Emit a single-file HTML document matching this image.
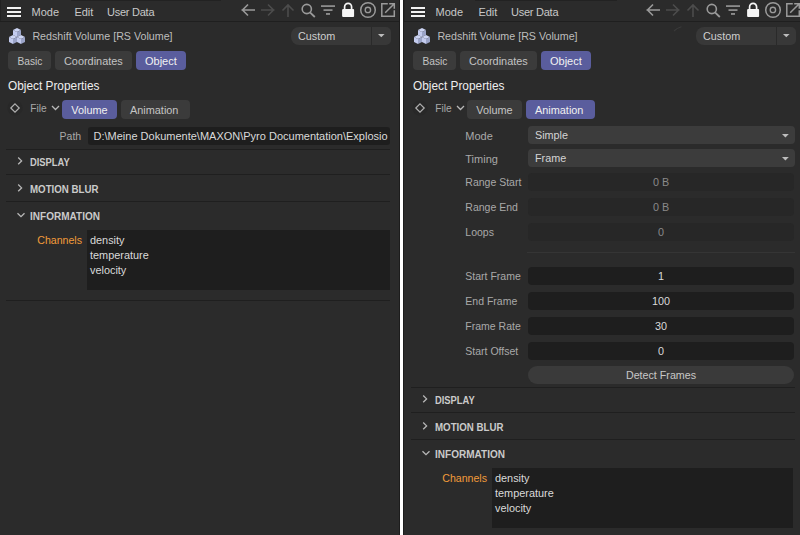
<!DOCTYPE html>
<html><head><meta charset="utf-8"><style>
html,body{margin:0;padding:0;}
body{width:800px;height:535px;overflow:hidden;background:#2b2b2b;position:relative;font-family:"Liberation Sans",sans-serif;}
.t{position:absolute;white-space:nowrap;}
.r{position:absolute;}
.s{position:absolute;overflow:visible;}
</style></head><body>
<div class="r" style="left:7px;top:7px;width:14px;height:2px;background:#f2f2f2;border-radius:0px;"></div><div class="r" style="left:7px;top:11px;width:14px;height:2px;background:#f2f2f2;border-radius:0px;"></div><div class="r" style="left:7px;top:15px;width:14px;height:2px;background:#f2f2f2;border-radius:0px;"></div><div class="t" style="left:31.5px;top:5.19px;font-size:11px;line-height:14px;color:#c8c8c8;font-weight:400;">Mode</div><div class="t" style="left:74.4px;top:5.19px;font-size:11px;line-height:14px;color:#c8c8c8;font-weight:400;">Edit</div><div class="t" style="left:107px;top:5.19px;font-size:11px;line-height:14px;color:#c8c8c8;font-weight:400;letter-spacing:-0.25px;">User Data</div><svg class="s" style="left:0;top:0" width="800" height="21"><path d="M241.5,10 H255 M248,4.5 L242.5,10 L248,15.5" stroke="#9a9a9a" stroke-width="1.6" fill="none"/><path d="M261,10 H274.5 M268,4.5 L273.5,10 L268,15.5" stroke="#4c4c4c" stroke-width="1.6" fill="none"/><path d="M288,5 V17 M282.5,10.5 L288,5 L293.5,10.5" stroke="#4c4c4c" stroke-width="1.6" fill="none"/><circle cx="306.8" cy="9" r="4.6" stroke="#9a9a9a" stroke-width="1.6" fill="none"/><path d="M310,12.3 L314.8,17" stroke="#9a9a9a" stroke-width="1.8"/><rect x="321" y="5.2" width="14" height="1.8" fill="#8c8c8c"/><rect x="323.5" y="9.2" width="9" height="1.8" fill="#8c8c8c"/><rect x="326" y="13" width="4" height="1.9" fill="#8c8c8c"/><path d="M344.6,9.5 V7 A3.5,3.7 0 0 1 351.6,7 V9.5" stroke="#f6f6f6" stroke-width="1.7" fill="none"/><rect x="342.1" y="8.9" width="12" height="8" rx="1" fill="#f6f6f6"/><circle cx="368" cy="10" r="7.3" stroke="#9a9a9a" stroke-width="1.5" fill="none"/><circle cx="367.9" cy="9.9" r="2.7" stroke="#9a9a9a" stroke-width="1.35" fill="none"/><path d="M387.8,3.8 H381.8 V16.2 H394.3 V10.2" stroke="#9a9a9a" stroke-width="1.5" fill="none"/><path d="M385.2,12.8 L394,4 M389.2,3.8 H394.3 V8.8" stroke="#9a9a9a" stroke-width="1.5" fill="none"/></svg><div class="r" style="left:0px;top:21px;width:400px;height:1px;background:#1f1f1f;border-radius:0px;"></div><svg class="s" style="left:8.5px;top:27.5px" width="17" height="17" viewBox="0 0 17 17"><polygon points="8,0 12,2 8,4 4,2" fill="#ccd4f3"/><polygon points="4,2 8,4 8,9 4,7" fill="#c3cbee"/><polygon points="8,4 12,2 12,7 8,9" fill="#9ba4c8"/><polygon points="4,7 8,9 4,11 0,9" fill="#ccd4f3"/><polygon points="0,9 4,11 4,16 0,14" fill="#c3cbee"/><polygon points="4,11 8,9 8,14 4,16" fill="#9ba4c8"/><polygon points="12,7 16,9 12,11 8,9" fill="#ccd4f3"/><polygon points="8,9 12,11 12,16 8,14" fill="#c3cbee"/><polygon points="12,11 16,9 16,14 12,16" fill="#9ba4c8"/></svg><div class="t" style="left:32.4px;top:29.79px;font-size:10.7px;line-height:13px;color:#bdbdbd;font-weight:400;">Redshift Volume [RS Volume]</div><div class="r" style="left:291px;top:27px;width:100px;height:18px;background:#383838;border-radius:8px 5px 5px 8px;"></div><div class="r" style="left:371px;top:27px;width:1px;height:18px;background:#2a2a2a;border-radius:0px;"></div><div class="t" style="left:298px;top:29.26px;font-size:10.8px;line-height:14px;color:#cfcfcf;font-weight:400;">Custom</div><svg class="s" style="left:378px;top:34.2px" width="8" height="4" viewBox="0 0 8 4"><polygon points="0,0 6.6,0 3.3,3.3" fill="#bcbcbc"/></svg><div class="r" style="left:8px;top:51px;width:43px;height:19px;background:#3b3b3b;border-radius:4px;"></div><div class="t" style="left:17.5px;top:54.97px;font-size:10.2px;line-height:13px;color:#c4c4c4;font-weight:400;">Basic</div><div class="r" style="left:55px;top:51px;width:77px;height:19px;background:#3b3b3b;border-radius:4px;"></div><div class="t" style="left:64px;top:54.22px;font-size:10.9px;line-height:14px;color:#c4c4c4;font-weight:400;">Coordinates</div><div class="r" style="left:136px;top:51px;width:50px;height:19px;background:#5a5d9d;border-radius:4px;"></div><div class="t" style="left:145px;top:54.19px;font-size:11px;line-height:14px;color:#f2f2f2;font-weight:400;">Object</div><div class="t" style="left:8px;top:79.19px;font-size:11.85px;line-height:15px;color:#eeeeee;font-weight:400;">Object Properties</div><svg class="s" style="left:7px;top:100px" width="16" height="16" viewBox="0 0 16 16"><circle cx="8" cy="8" r="7.6" fill="#282828"/></svg><svg class="s" style="left:9px;top:102px" width="12" height="12" viewBox="0 0 12 12"><polygon points="6,1.8 10.2,6 6,10.2 1.8,6" stroke="#b0b0b0" stroke-width="1.2" fill="none"/></svg><div class="t" style="left:30.3px;top:101.77px;font-size:10.2px;line-height:13px;color:#a8a8a8;font-weight:400;">File</div><svg class="s" style="left:50.5px;top:104.8px" width="10" height="6" viewBox="0 0 10 6"><path d="M1,1 L4.5,4.5 L8,1" stroke="#b8b8b8" stroke-width="1.3" fill="none"/></svg><div class="r" style="left:62px;top:100px;width:55px;height:19px;background:#5a5d9d;border-radius:4px;"></div><div class="t" style="left:71.3px;top:103.02px;font-size:10.9px;line-height:14px;color:#f0f0f0;font-weight:400;">Volume</div><div class="r" style="left:121px;top:100px;width:69px;height:19px;background:#3b3b3b;border-radius:4px;"></div><div class="t" style="left:130px;top:103.02px;font-size:10.9px;line-height:14px;color:#c4c4c4;font-weight:400;">Animation</div><div class="t" style="left:-218.8px;width:300px;text-align:right;top:129.86px;font-size:10.5px;line-height:13px;color:#a9a9a9;font-weight:400;">Path</div><div class="r" style="left:88px;top:127px;width:302px;height:18px;background:#1e1e1e;border-radius:3px;"></div><div class="t" style="left:88px;top:127px;width:302px;height:18px;overflow:hidden;"><div class="t" style="left:5.5px;top:3.19px;font-size:11px;line-height:13px;color:#dadada;white-space:nowrap;">D:\Meine Dokumente\MAXON\Pyro Documentation\Explosio</div></div><div class="r" style="left:6px;top:149px;width:384px;height:1px;background:#1f1f1f;border-radius:0px;"></div><div class="t" style="left:30.3px;top:156.10px;font-size:10.4px;line-height:13px;color:#cacaca;font-weight:700;transform:scaleX(0.9);transform-origin:0 0;">DISPLAY</div><svg class="s" style="left:16px;top:156px" width="8" height="10" viewBox="0 0 8 10"><path d="M2.2,1.5 L5.6,4.9 L2.2,8.3" stroke="#b8b8b8" stroke-width="1.3" fill="none"/></svg><div class="r" style="left:6px;top:174px;width:384px;height:1px;background:#1f1f1f;border-radius:0px;"></div><div class="t" style="left:30.3px;top:183.10px;font-size:10.4px;line-height:13px;color:#cacaca;font-weight:700;transform:scaleX(0.935);transform-origin:0 0;">MOTION BLUR</div><svg class="s" style="left:16px;top:183px" width="8" height="10" viewBox="0 0 8 10"><path d="M2.2,1.5 L5.6,4.9 L2.2,8.3" stroke="#b8b8b8" stroke-width="1.3" fill="none"/></svg><div class="r" style="left:6px;top:201px;width:384px;height:1px;background:#1f1f1f;border-radius:0px;"></div><div class="t" style="left:30.3px;top:210.10px;font-size:10.4px;line-height:13px;color:#cacaca;font-weight:700;transform:scaleX(0.965);transform-origin:0 0;">INFORMATION</div><svg class="s" style="left:16px;top:211px" width="10" height="8" viewBox="0 0 10 8"><path d="M1.5,2.2 L5,5.7 L8.5,2.2" stroke="#b8b8b8" stroke-width="1.3" fill="none"/></svg><div class="t" style="left:-218px;width:300px;text-align:right;top:233.83px;font-size:10.6px;line-height:13px;color:#f29b3a;font-weight:400;">Channels</div><div class="r" style="left:87px;top:230px;width:303px;height:60px;background:#1e1e1e;border-radius:0px;"></div><div class="t" style="left:90px;top:233.22px;font-size:10.9px;line-height:14px;color:#dadada;font-weight:400;">density</div><div class="t" style="left:90px;top:248.22px;font-size:10.9px;line-height:14px;color:#dadada;font-weight:400;">temperature</div><div class="t" style="left:90px;top:263.22px;font-size:10.9px;line-height:14px;color:#dadada;font-weight:400;">velocity</div><div class="r" style="left:6px;top:300px;width:384px;height:1px;background:#1f1f1f;border-radius:0px;"></div><div class="r" style="left:411px;top:7px;width:14px;height:2px;background:#f2f2f2;border-radius:0px;"></div><div class="r" style="left:411px;top:11px;width:14px;height:2px;background:#f2f2f2;border-radius:0px;"></div><div class="r" style="left:411px;top:15px;width:14px;height:2px;background:#f2f2f2;border-radius:0px;"></div><div class="t" style="left:435.5px;top:5.19px;font-size:11px;line-height:14px;color:#c8c8c8;font-weight:400;">Mode</div><div class="t" style="left:478.4px;top:5.19px;font-size:11px;line-height:14px;color:#c8c8c8;font-weight:400;">Edit</div><div class="t" style="left:511px;top:5.19px;font-size:11px;line-height:14px;color:#c8c8c8;font-weight:400;letter-spacing:-0.25px;">User Data</div><svg class="s" style="left:0;top:0" width="800" height="21"><path d="M646.5,10 H660 M653,4.5 L647.5,10 L653,15.5" stroke="#9a9a9a" stroke-width="1.6" fill="none"/><path d="M666,10 H679.5 M673,4.5 L678.5,10 L673,15.5" stroke="#4c4c4c" stroke-width="1.6" fill="none"/><path d="M693,5 V17 M687.5,10.5 L693,5 L698.5,10.5" stroke="#4c4c4c" stroke-width="1.6" fill="none"/><circle cx="711.8" cy="9" r="4.6" stroke="#9a9a9a" stroke-width="1.6" fill="none"/><path d="M715,12.3 L719.8,17" stroke="#9a9a9a" stroke-width="1.8"/><rect x="726" y="5.2" width="14" height="1.8" fill="#8c8c8c"/><rect x="728.5" y="9.2" width="9" height="1.8" fill="#8c8c8c"/><rect x="731" y="13" width="4" height="1.9" fill="#8c8c8c"/><path d="M749.6,9.5 V7 A3.5,3.7 0 0 1 756.6,7 V9.5" stroke="#f6f6f6" stroke-width="1.7" fill="none"/><rect x="747.1" y="8.9" width="12" height="8" rx="1" fill="#f6f6f6"/><circle cx="773" cy="10" r="7.3" stroke="#9a9a9a" stroke-width="1.5" fill="none"/><circle cx="772.9" cy="9.9" r="2.7" stroke="#9a9a9a" stroke-width="1.35" fill="none"/><path d="M792.8,3.8 H786.8 V16.2 H799.3 V10.2" stroke="#9a9a9a" stroke-width="1.5" fill="none"/><path d="M790.2,12.8 L799,4 M794.2,3.8 H799.3 V8.8" stroke="#9a9a9a" stroke-width="1.5" fill="none"/></svg><div class="r" style="left:404px;top:21px;width:400px;height:1px;background:#1f1f1f;border-radius:0px;"></div><svg class="s" style="left:413.5px;top:27.5px" width="17" height="17" viewBox="0 0 17 17"><polygon points="8,0 12,2 8,4 4,2" fill="#ccd4f3"/><polygon points="4,2 8,4 8,9 4,7" fill="#c3cbee"/><polygon points="8,4 12,2 12,7 8,9" fill="#9ba4c8"/><polygon points="4,7 8,9 4,11 0,9" fill="#ccd4f3"/><polygon points="0,9 4,11 4,16 0,14" fill="#c3cbee"/><polygon points="4,11 8,9 8,14 4,16" fill="#9ba4c8"/><polygon points="12,7 16,9 12,11 8,9" fill="#ccd4f3"/><polygon points="8,9 12,11 12,16 8,14" fill="#c3cbee"/><polygon points="12,11 16,9 16,14 12,16" fill="#9ba4c8"/></svg><div class="t" style="left:437.4px;top:29.79px;font-size:10.7px;line-height:13px;color:#bdbdbd;font-weight:400;">Redshift Volume [RS Volume]</div><div class="r" style="left:696px;top:27px;width:100px;height:18px;background:#383838;border-radius:8px 5px 5px 8px;"></div><div class="r" style="left:776px;top:27px;width:1px;height:18px;background:#2a2a2a;border-radius:0px;"></div><div class="t" style="left:703px;top:29.26px;font-size:10.8px;line-height:14px;color:#cfcfcf;font-weight:400;">Custom</div><svg class="s" style="left:783px;top:34.2px" width="8" height="4" viewBox="0 0 8 4"><polygon points="0,0 6.6,0 3.3,3.3" fill="#bcbcbc"/></svg><div class="r" style="left:413px;top:51px;width:43px;height:19px;background:#3b3b3b;border-radius:4px;"></div><div class="t" style="left:422.5px;top:54.97px;font-size:10.2px;line-height:13px;color:#c4c4c4;font-weight:400;">Basic</div><div class="r" style="left:460px;top:51px;width:77px;height:19px;background:#3b3b3b;border-radius:4px;"></div><div class="t" style="left:469px;top:54.22px;font-size:10.9px;line-height:14px;color:#c4c4c4;font-weight:400;">Coordinates</div><div class="r" style="left:541px;top:51px;width:50px;height:19px;background:#5a5d9d;border-radius:4px;"></div><div class="t" style="left:550px;top:54.19px;font-size:11px;line-height:14px;color:#f2f2f2;font-weight:400;">Object</div><div class="t" style="left:413px;top:79.19px;font-size:11.85px;line-height:15px;color:#eeeeee;font-weight:400;">Object Properties</div><svg class="s" style="left:412px;top:100px" width="16" height="16" viewBox="0 0 16 16"><circle cx="8" cy="8" r="7.6" fill="#282828"/></svg><svg class="s" style="left:414px;top:102px" width="12" height="12" viewBox="0 0 12 12"><polygon points="6,1.8 10.2,6 6,10.2 1.8,6" stroke="#b0b0b0" stroke-width="1.2" fill="none"/></svg><div class="t" style="left:435.3px;top:101.77px;font-size:10.2px;line-height:13px;color:#a8a8a8;font-weight:400;">File</div><svg class="s" style="left:455.5px;top:104.8px" width="10" height="6" viewBox="0 0 10 6"><path d="M1,1 L4.5,4.5 L8,1" stroke="#b8b8b8" stroke-width="1.3" fill="none"/></svg><div class="r" style="left:467px;top:100px;width:55px;height:19px;background:#3b3b3b;border-radius:4px;"></div><div class="t" style="left:476.3px;top:103.02px;font-size:10.9px;line-height:14px;color:#c4c4c4;font-weight:400;">Volume</div><div class="r" style="left:526px;top:100px;width:69px;height:19px;background:#5a5d9d;border-radius:4px;"></div><div class="t" style="left:535px;top:103.02px;font-size:10.9px;line-height:14px;color:#f0f0f0;font-weight:400;">Animation</div><div class="t" style="left:465.3px;top:128.59px;font-size:11px;line-height:14px;color:#a9a9a9;font-weight:400;">Mode</div><div class="r" style="left:528px;top:126px;width:267px;height:18px;background:#3c3c3c;border-radius:4px;"></div><div class="t" style="left:535px;top:127.66px;font-size:10.8px;line-height:14px;color:#d4d4d4;font-weight:400;">Simple</div><svg class="s" style="left:781.6px;top:134px" width="8" height="4" viewBox="0 0 8 4"><polygon points="0,0 6.8,0 3.4,3.4" fill="#bdbdbd"/></svg><div class="t" style="left:465.3px;top:151.69px;font-size:11px;line-height:14px;color:#a9a9a9;font-weight:400;">Timing</div><div class="r" style="left:528px;top:149px;width:267px;height:18px;background:#3c3c3c;border-radius:4px;"></div><div class="t" style="left:535px;top:150.66px;font-size:10.8px;line-height:14px;color:#d4d4d4;font-weight:400;">Frame</div><svg class="s" style="left:781.6px;top:157px" width="8" height="4" viewBox="0 0 8 4"><polygon points="0,0 6.8,0 3.4,3.4" fill="#bdbdbd"/></svg><div class="t" style="left:465.3px;top:175.86px;font-size:10.5px;line-height:13px;color:#a9a9a9;font-weight:400;">Range Start</div><div class="r" style="left:528px;top:173px;width:265.5px;height:17.5px;background:#272727;border-radius:4px;"></div><div class="t" style="left:461px;width:400px;text-align:center;top:175.26px;font-size:10.8px;line-height:14px;color:#8a8a8a;font-weight:400;">0 B</div><div class="t" style="left:465.3px;top:200.86px;font-size:10.5px;line-height:13px;color:#a9a9a9;font-weight:400;">Range End</div><div class="r" style="left:528px;top:198px;width:265.5px;height:17.5px;background:#272727;border-radius:4px;"></div><div class="t" style="left:461px;width:400px;text-align:center;top:200.26px;font-size:10.8px;line-height:14px;color:#8a8a8a;font-weight:400;">0 B</div><div class="t" style="left:465.3px;top:225.86px;font-size:10.5px;line-height:13px;color:#a9a9a9;font-weight:400;">Loops</div><div class="r" style="left:528px;top:223px;width:265.5px;height:17.5px;background:#272727;border-radius:4px;"></div><div class="t" style="left:461px;width:400px;text-align:center;top:225.26px;font-size:10.8px;line-height:14px;color:#8a8a8a;font-weight:400;">0</div><div class="t" style="left:465.3px;top:269.86px;font-size:10.5px;line-height:13px;color:#a9a9a9;font-weight:400;">Start Frame</div><div class="r" style="left:528px;top:267px;width:265.5px;height:18px;background:#1e1e1e;border-radius:4px;"></div><div class="t" style="left:461px;width:400px;text-align:center;top:269.06px;font-size:10.8px;line-height:14px;color:#dadada;font-weight:400;">1</div><div class="t" style="left:465.3px;top:294.86px;font-size:10.5px;line-height:13px;color:#a9a9a9;font-weight:400;">End Frame</div><div class="r" style="left:528px;top:292px;width:265.5px;height:18px;background:#1e1e1e;border-radius:4px;"></div><div class="t" style="left:461px;width:400px;text-align:center;top:294.06px;font-size:10.8px;line-height:14px;color:#dadada;font-weight:400;">100</div><div class="t" style="left:465.3px;top:319.86px;font-size:10.5px;line-height:13px;color:#a9a9a9;font-weight:400;">Frame Rate</div><div class="r" style="left:528px;top:317px;width:265.5px;height:18px;background:#1e1e1e;border-radius:4px;"></div><div class="t" style="left:461px;width:400px;text-align:center;top:319.06px;font-size:10.8px;line-height:14px;color:#dadada;font-weight:400;">30</div><div class="t" style="left:465.3px;top:344.86px;font-size:10.5px;line-height:13px;color:#a9a9a9;font-weight:400;">Start Offset</div><div class="r" style="left:528px;top:342px;width:265.5px;height:18px;background:#1e1e1e;border-radius:4px;"></div><div class="t" style="left:461px;width:400px;text-align:center;top:344.06px;font-size:10.8px;line-height:14px;color:#dadada;font-weight:400;">0</div><div class="r" style="left:527px;top:252px;width:268px;height:1px;background:#353535;border-radius:0px;"></div><div class="r" style="left:528px;top:366px;width:265.5px;height:18px;background:#3a3a3a;border-radius:9px;"></div><div class="t" style="left:461px;width:400px;text-align:center;top:368.59px;font-size:10.7px;line-height:13px;color:#c8c8c8;font-weight:400;">Detect Frames</div><div class="r" style="left:411px;top:387px;width:384px;height:1px;background:#1f1f1f;border-radius:0px;"></div><div class="t" style="left:435.3px;top:394.10px;font-size:10.4px;line-height:13px;color:#cacaca;font-weight:700;transform:scaleX(0.9);transform-origin:0 0;">DISPLAY</div><svg class="s" style="left:421px;top:394px" width="8" height="10" viewBox="0 0 8 10"><path d="M2.2,1.5 L5.6,4.9 L2.2,8.3" stroke="#b8b8b8" stroke-width="1.3" fill="none"/></svg><div class="r" style="left:411px;top:412px;width:384px;height:1px;background:#1f1f1f;border-radius:0px;"></div><div class="t" style="left:435.3px;top:421.10px;font-size:10.4px;line-height:13px;color:#cacaca;font-weight:700;transform:scaleX(0.935);transform-origin:0 0;">MOTION BLUR</div><svg class="s" style="left:421px;top:421px" width="8" height="10" viewBox="0 0 8 10"><path d="M2.2,1.5 L5.6,4.9 L2.2,8.3" stroke="#b8b8b8" stroke-width="1.3" fill="none"/></svg><div class="r" style="left:411px;top:439px;width:384px;height:1px;background:#1f1f1f;border-radius:0px;"></div><div class="t" style="left:435.3px;top:448.10px;font-size:10.4px;line-height:13px;color:#cacaca;font-weight:700;transform:scaleX(0.965);transform-origin:0 0;">INFORMATION</div><svg class="s" style="left:421px;top:449px" width="10" height="8" viewBox="0 0 10 8"><path d="M1.5,2.2 L5,5.7 L8.5,2.2" stroke="#b8b8b8" stroke-width="1.3" fill="none"/></svg><div class="t" style="left:187px;width:300px;text-align:right;top:471.83px;font-size:10.6px;line-height:13px;color:#f29b3a;font-weight:400;">Channels</div><div class="r" style="left:492px;top:468px;width:301px;height:60px;background:#1e1e1e;border-radius:0px;"></div><div class="t" style="left:495px;top:471.22px;font-size:10.9px;line-height:14px;color:#dadada;font-weight:400;">density</div><div class="t" style="left:495px;top:486.22px;font-size:10.9px;line-height:14px;color:#dadada;font-weight:400;">temperature</div><div class="t" style="left:495px;top:501.22px;font-size:10.9px;line-height:14px;color:#dadada;font-weight:400;">velocity</div><div class="r" style="left:0px;top:0px;width:1px;height:21px;background:#232323;border-radius:0px;"></div><div class="r" style="left:71px;top:0px;width:150px;height:1px;background:#222222;border-radius:0px;"></div><div class="r" style="left:475px;top:0px;width:142px;height:1px;background:#222222;border-radius:0px;"></div><div class="r" style="left:404px;top:0px;width:1px;height:21px;background:#262626;border-radius:0px;"></div><svg class="s" style="left:670px;top:24px" width="16" height="10" viewBox="0 0 16 10"><path d="M4,7 Q7,4 11.5,2.8" stroke="#3a3a3a" stroke-width="1.1" fill="none"/></svg>
<div class="r" style="left:399px;top:0;width:1px;height:535px;background:#1c1c1c"></div>
<div class="r" style="left:400px;top:0;width:3px;height:535px;background:#ffffff"></div>
<div class="r" style="left:403px;top:0;width:1px;height:535px;background:#1c1c1c"></div>
</body></html>
